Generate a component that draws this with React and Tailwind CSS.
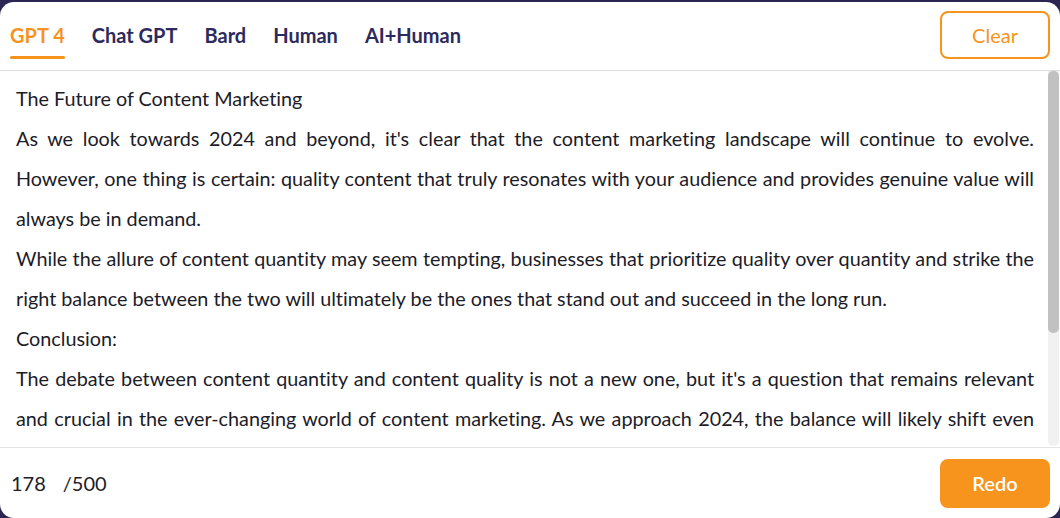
import React from 'react';

const tabs = ['GPT 4', 'Chat GPT', 'Bard', 'Human', 'AI+Human'];

const paragraphs = [
  'The Future of Content Marketing',
  "As we look towards 2024 and beyond, it's clear that the content marketing landscape will continue to evolve. However, one thing is certain: quality content that truly resonates with your audience and provides genuine value will always be in demand.",
  'While the allure of content quantity may seem tempting, businesses that prioritize quality over quantity and strike the right balance between the two will ultimately be the ones that stand out and succeed in the long run.',
  'Conclusion:',
  "The debate between content quantity and content quality is not a new one, but it's a question that remains relevant and crucial in the ever-changing world of content marketing. As we approach 2024, the balance will likely shift even further towards quality, as audiences become more discerning and search engines reward content that offers real depth and expertise.",
];

const App = () => (
  <div className="w-[1060px] h-[518px] bg-[#2b2652] pt-[2px] font-['Lato',sans-serif] [font-variant-ligatures:none]">
    <div className="h-[516px] bg-white rounded-[14px] flex flex-col overflow-hidden">
      <div className="h-[69px] flex items-center justify-between border-b border-[#dcdcdc] pl-[10px] pr-[10px] shrink-0">
        <div className="flex items-center gap-[27px] h-full">
          {tabs.map((tab, i) => (
            <div
              key={tab}
              className={`relative h-full flex items-center text-[20px] font-bold pb-[2px] ${
                i === 0 ? 'text-[#f7941d]' : 'text-[#2d2a5e]'
              }`}
            >
              {tab}
              {i === 0 && (
                <span className="absolute left-0 right-0 top-[54px] h-[3px] bg-[#f7941d] rounded-full" />
              )}
            </div>
          ))}
        </div>
        <button className="w-[110px] h-[48px] mt-[-2px] border-2 border-[#f7941d] rounded-[8px] text-[#f7941d] text-[20px]">
          Clear
        </button>
      </div>

      <div className="flex-1 min-h-0 flex">
        <div className="flex-1 overflow-hidden pl-4 pr-[14px] pt-[7px] text-[19.8px] leading-[40px] text-[#1c1c28] text-justify">
          {paragraphs.map((p, i) => (
            <p key={i}>{p}</p>
          ))}
        </div>
        <div className="w-[11px] mr-[1px] mb-[1px] bg-[#f1f1f1] rounded-b-[5px]">
          <div className="h-[262px] bg-[#c1c1c1] rounded-[5px]" />
        </div>
      </div>

      <div className="h-[71px] shrink-0 border-t border-[#e3e3e3] flex items-center justify-between pl-[11px] pr-[10px]">
        <div className="flex gap-[17px] text-[20px] text-[#1c1c28]">
          <span>178</span>
          <span>/500</span>
        </div>
        <button className="w-[110px] h-[49px] bg-[#f7941d] rounded-[8px] text-white text-[20px] font-semibold">
          Redo
        </button>
      </div>
    </div>
  </div>
);

export default App;
